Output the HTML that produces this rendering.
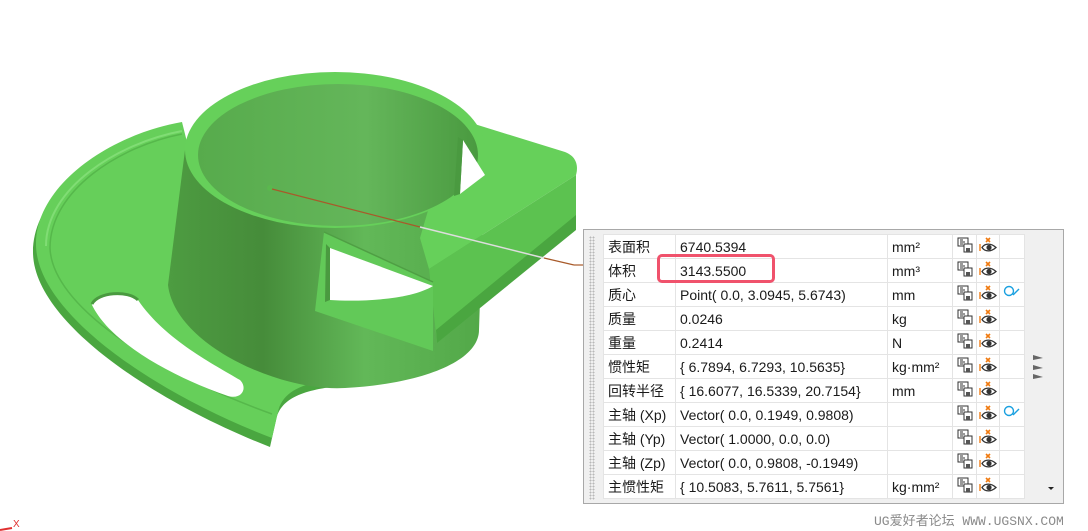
<!DOCTYPE html>
<html><head><meta charset="utf-8"><style>
body{margin:0;width:1088px;height:531px;background:#fff;position:relative;overflow:hidden;font-family:"Liberation Sans","Noto Sans CJK SC",sans-serif;}
#panel{position:absolute;left:583px;top:229px;width:481px;height:275px;background:#f0f0f0;border:1px solid #a8a8a8;box-sizing:border-box;}
#grip{position:absolute;left:5px;top:6px;width:6px;height:264px;background-image:radial-gradient(#b8b8b8 45%,transparent 50%);background-size:3px 3px;}
table{position:absolute;left:19px;top:4px;border-collapse:collapse;background:#fff;font-size:14px;color:#1a1a1a;}
td{border:1px solid #e4e4e4;height:23px;padding:0 0 0 4px;white-space:nowrap;}
td.i{padding:0;text-align:center;}
.hl{position:absolute;left:657px;top:254px;width:118px;height:29px;border:3px solid #f0526c;border-radius:5px;box-sizing:border-box;}
.wm{position:absolute;left:874px;top:510px;font-family:"Liberation Mono","Noto Sans CJK SC",monospace;font-size:13px;color:#8a8a8a;}
</style></head><body>
<svg width="1088" height="531" style="position:absolute;left:0;top:0">
<defs>
<linearGradient id="cyl" x1="0" x2="1"><stop offset="0" stop-color="#4d9c41"/><stop offset=".3" stop-color="#468c3a"/><stop offset=".62" stop-color="#62b858"/><stop offset="1" stop-color="#52a848"/></linearGradient>
<linearGradient id="inn" x1="0" x2="1"><stop offset="0" stop-color="#57ab4c"/><stop offset=".6" stop-color="#64b65a"/><stop offset="1" stop-color="#4a9a40"/></linearGradient>
</defs>
<!-- base plate -->
<path d="M180,128 C110,140 33,190 33,252 C33,320 150,400 270,447 L276,420 C280,400 300,390 340,386 L345,300 L185,150 Z" fill="#4aa640"/>
<path d="M182,122 C112,134 36,184 36,244 C36,312 152,392 272,438 L278,412 C282,392 302,382 342,378 L347,292 L187,142 Z" fill="#66cf5a"/>
<path d="M182,134 C120,146 50,190 50,248 C52,305 150,370 272,414" fill="none" stroke="#56b84b" stroke-width="1.5"/>
<path d="M182,131 C118,143 46,188 46,246" fill="none" stroke="#80dd74" stroke-width="2"/>
<!-- slot hole -->
<path d="M92,305 C98,292 128,290 138,300 C165,340 215,365 240,380 C248,388 242,400 228,396 C170,376 110,342 92,305Z" fill="#fff"/>
<path d="M92,304 C98,292 128,290 138,300" fill="none" stroke="#4a9a40" stroke-width="3"/>
<!-- cylinder body -->
<path d="M185,150 L168,285 C175,345 280,392 345,388 C420,384 479,362 479,330 L485,150 Z" fill="url(#cyl)"/>
<!-- box top -->
<path d="M455,118 L565,152 C578,157 578,168 576,175 L429,269 L420,238 Z" fill="#66d05a"/>
<!-- box front -->
<path d="M429,269 L576,175 L576,228 L437,343 Z" fill="#5cc250"/>
<path d="M576,215 L576,230 L437,343 L436,330 Z" fill="#4aa640"/>
<!-- cylinder top ring -->
<ellipse cx="335" cy="150" rx="150" ry="78" fill="#66d05a"/>
<ellipse cx="338" cy="155" rx="140" ry="71" fill="url(#inn)"/>
<!-- back window -->
<path d="M463,140 L485,175 L460,194 Z" fill="#fff"/>
<path d="M458,137 L463,140 L460,194 L454,196 Z" fill="#4a9a40"/>
<!-- side window frame -->
<path d="M324,232 L433,282 L433,351 L315,311 Z" fill="#62c958"/>
<path d="M330,248 L433,286 C410,300 360,302 330,300 Z" fill="#fff"/>
<path d="M330,248 L330,300 L325,302 L326,244Z" fill="#4a9a40"/>
<path d="M324,232 L433,282" stroke="#4f9f44" stroke-width="1.5"/>
<!-- leader line -->
<circle cx="270" cy="188" r="3" fill="#5ab84e"/>
<line x1="272" y1="189" x2="420" y2="227" stroke="#a85a2a" stroke-width="1.2"/>
<line x1="420" y1="227" x2="544" y2="258" stroke="#ddd" stroke-width="1.5"/>
<line x1="544" y1="258" x2="574" y2="265" stroke="#a85a2a" stroke-width="1.2"/>
<line x1="574" y1="265" x2="584" y2="265" stroke="#a85a2a" stroke-width="1.2"/>
<!-- axis -->
<text x="13" y="527" font-size="10" fill="#e03030" font-family="Liberation Sans">X</text>
<line x1="0" y1="530" x2="12" y2="528" stroke="#e03030" stroke-width="2"/>
</svg>
<div id="panel"><div id="grip"></div>
<table>
<colgroup><col style="width:72px"><col style="width:212px"><col style="width:65px"><col style="width:24px"><col style="width:23px"><col style="width:25px"></colgroup>
<tbody id="tb"></tbody>
</table>
<svg width="12" height="30" style="position:absolute;left:449px;top:125px"><path d="M0,0 L10,3 L0,5Z M0,10 L10,13 L0,15Z M0,19 L10,22 L0,24Z" fill="#666"/></svg>
<svg width="8" height="6" style="position:absolute;left:464px;top:257px"><path d="M0,0 L6,0 L3,3Z" fill="#222"/></svg>
</div>
<div class="hl"></div>
<div class="wm">UG爱好者论坛 WWW.UGSNX.COM</div>
<script>
var rows=[["表面积","6740.5394","mm²",0],["体积","3143.5500","mm³",0],["质心","Point( 0.0, 3.0945, 5.6743)","mm",1],["质量","0.0246","kg",0],["重量","0.2414","N",0],["惯性矩","{ 6.7894, 6.7293, 10.5635}","kg·mm²",0],["回转半径","{ 16.6077, 16.5339, 20.7154}","mm",0],["主轴 (Xp)","Vector( 0.0, 0.1949, 0.9808)","",1],["主轴 (Yp)","Vector( 1.0000, 0.0, 0.0)","",0],["主轴 (Zp)","Vector( 0.0, 0.9808, -0.1949)","",0],["主惯性矩","{ 10.5083, 5.7611, 5.7561}","kg·mm²",0]];
var save='<svg width="16" height="16" viewBox="0 0 16 16"><rect x="1" y="1" width="10" height="8" fill="#fff" stroke="#333"/><path d="M3,3h3M3,5h5M3,7h3" stroke="#333"/><rect x="7" y="7" width="8" height="8" fill="#fff" stroke="#333"/><rect x="9" y="11" width="4" height="4" fill="#555"/></svg>';
var eye='<svg width="18" height="16" viewBox="0 0 18 16"><path d="M7,1l4,4M11,1l-4,4" stroke="#f07a10" stroke-width="1.6"/><path d="M1,7v7" stroke="#f07a10" stroke-width="1.4"/><path d="M3,10.5C6,6 12,6 17,10.5C12,15 6,15 3,10.5Z" fill="#fff" stroke="#333" stroke-width="1.3"/><circle cx="10" cy="10.5" r="2.6" fill="#333"/></svg>';
var mag='<svg width="18" height="16" viewBox="0 0 18 16"><circle cx="6" cy="6" r="4.5" fill="none" stroke="#1aa0e0" stroke-width="1.4"/><path d="M10,10L16,4" stroke="#1aa0e0" stroke-width="1.4"/></svg>';
var h='';rows.forEach(function(r){h+='<tr><td>'+r[0]+'</td><td>'+r[1]+'</td><td>'+r[2]+'</td><td class="i">'+save+'</td><td class="i">'+eye+'</td><td class="i">'+(r[3]?mag:'')+'</td></tr>';});
document.getElementById('tb').innerHTML=h;
</script>
</body></html>
